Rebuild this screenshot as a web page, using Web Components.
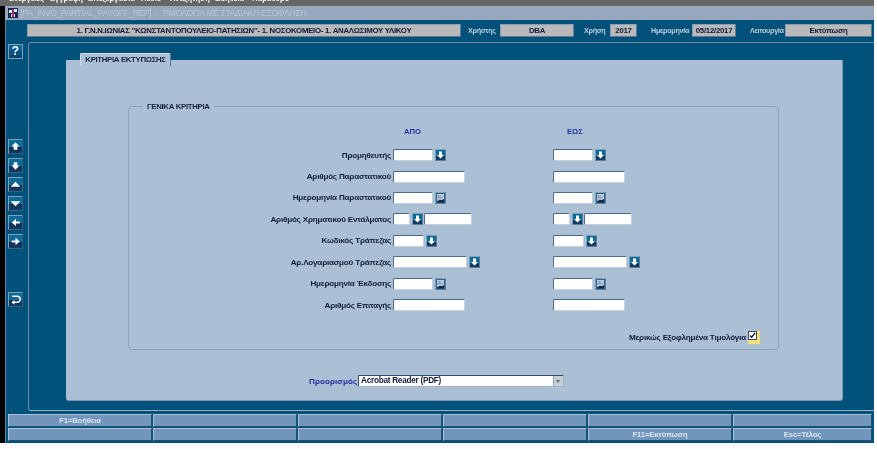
<!DOCTYPE html>
<html lang="el"><head><meta charset="utf-8"><title>PA_INVO_PARTIAL_PAYOFF_REP</title>
<style>
html,body{margin:0;height:100%;background:#fff;overflow:hidden}
body{font:bold 8px "Liberation Sans",Arial,sans-serif;color:#101c3c}
</style></head><body>
<app-shell>
  <menu-bar slot="menu"></menu-bar>
  <title-bar slot="title"></title-bar>
  <info-bar slot="info"></info-bar>
  <tool-bar slot="tools"></tool-bar>
  <form-panel slot="canvas"></form-panel>
  <fkey-bar slot="keys"></fkey-bar>
</app-shell>
<script>
const def=(name,css,html)=>{customElements.define(name,class extends HTMLElement{
  constructor(){super();this.attachShadow({mode:'open'}).innerHTML=`<style>${css}</style>${typeof html==='function'?'':html}`}
  connectedCallback(){if(typeof html==='function'){this.shadowRoot.innerHTML=`<style>${css}</style>${html(this)}`}}
})};
const arrows={
 up:'<path d="M5.5 2 9.2 6H7.2v3H3.8V6H1.8z" fill="#fff"/>',
 down:'<path d="M5.5 10 9.2 6H7.2V3H3.8v3H1.8z" fill="#fff"/>',
 tup:'<path d="M5.5 3.5 10 8H1z" fill="#fff"/>',
 tdown:'<path d="M5.5 8.5 10 4H1z" fill="#fff"/>',
 left:'<path d="M2 6l4-3.5V5h3.5v2H6v2.5z" fill="#fff"/>',
 right:'<path d="M9.5 6l-4-3.5V5H2v2h3.5v2.5z" fill="#fff"/>',
 back:'<path d="M2.5 3H7a2.7 2.7 0 0 1 0 5.6H4" fill="none" stroke="#fff" stroke-width="1.3"/><path d="M4.6 6.4v4.4L1.6 8.6z" fill="#fff"/>'
};
def('app-shell',`
 :host{display:flex;flex-direction:column;width:874px;height:443px;box-sizing:border-box;border-left:5px solid #000;background:#00527a;filter:blur(.3px);box-shadow:inset 1px 0 0 #5f7f9a}
 .body{flex:1;display:flex;min-height:0}
 ::slotted([slot=tools]){flex:none}
 ::slotted([slot=canvas]){flex:1}
`,`<slot name="menu"></slot><slot name="title"></slot><slot name="info"></slot><div class="body"><slot name="tools"></slot><slot name="canvas"></slot></div><slot name="keys"></slot>`);
def('menu-bar',`
 :host{display:block;height:6px;margin-left:-5px;background:#666;overflow:hidden;color:#f4f4f4;font-size:7.6px;line-height:9px;position:relative;z-index:1}
 span{position:absolute;top:-6px;white-space:nowrap}
`,`<span style="left:9px">Ενέργειες</span><span style="left:50px">Εγγραφή</span><span style="left:88px">Επεξεργασία</span><span style="left:141px">Πεδίο</span><span style="left:170px">Αναζήτηση</span><span style="left:215px">Βοήθεια</span><span style="left:252px">Παράθυρο</span>`);
def('title-bar',`
 :host{display:flex;align-items:center;gap:1.5px;height:14px;background:#98a8bc;color:#b9c6d6;font:normal 8.4px "Liberation Sans",Arial,sans-serif;letter-spacing:-.25px;white-space:pre;box-sizing:border-box;padding-left:2px}
 svg{width:12px;height:12px;flex:none}
`,`<svg viewBox="0 0 12 12"><rect x="1" y="1" width="10" height="10" fill="#1a2558"/><path d="M2 3h3v3H2zM7 2h3v3H7zM4 7h4v3H4z" fill="#e8e8f0"/><path d="M5 2h2v8H5z" fill="#8a3a70"/></svg><span>[PA_INVO_PARTIAL_PAYOFF_REP]  :  ΤΙΜΟΛΟΓΙΑ ΜΕ ΣΤΑΔΙΑΚΗ ΕΞΟΦΛΗΣΗ</span>`);
def('info-field',`
 :host{display:flex;align-items:center;justify-content:center;box-sizing:border-box;height:13px;background:#b9b9b9;color:#10183a;border:1px solid;border-color:#8b9db2 #5d7997 #5d7997 #8b9db2;border-radius:1px;font-size:7.8px;letter-spacing:-.25px;white-space:nowrap}
`,`<slot></slot>`);
def('info-bar',`
 :host{display:flex;align-items:center;height:22px;box-sizing:border-box;padding:4px 0 5px 22px;color:#bccbdb;font:bold 7.2px "Liberation Sans",Arial,sans-serif;letter-spacing:-.3px;white-space:nowrap}
 span{display:block}
`,`<info-field style="width:434px">1. Γ.Ν.Ν.ΙΩΝΙΑΣ "ΚΩΝΣΤΑΝΤΟΠΟΥΛΕΙΟ-ΠΑΤΗΣΙΩΝ"- 1. ΝΟΣΟΚΟΜΕΙΟ- 1. ΑΝΑΛΩΣΙΜΟΥ ΥΛΙΚΟΥ</info-field>
<span style="margin-left:7px;width:32px">Χρήστης</span><info-field style="width:74px">DBA</info-field>
<span style="margin-left:10px;width:26px">Χρήση</span><info-field style="width:27px">2017</info-field>
<span style="margin-left:14px;width:41px">Ημερομηνία</span><info-field style="width:44px">05/12/2017</info-field>
<span style="margin-left:14px;width:35px">Λειτουργία</span><info-field style="width:87px">Εκτύπωση</info-field>`);
def('tool-button',`
 :host{display:block;box-sizing:border-box;width:15px;height:15px;border:1px solid;border-color:#7fa0ba #39607f #39607f #7fa0ba;border-radius:1px;background:linear-gradient(#0b6a96 0,#0b6a96 50%,#0d2e57 55%,#123a63)}
 svg{display:block;width:13px;height:13px}
`,el=>`<svg viewBox="0 0 11 12">${arrows[el.getAttribute('icon')]||''}</svg>`);
def('tool-bar',`
 :host{display:flex;flex-direction:column;box-sizing:border-box;width:23px;padding:2px 0 0 3px}
 .help{box-sizing:border-box;width:15px;height:15px;flex:none;border:1px solid #7fa0ba;background:linear-gradient(#0a6c9b,#0a3f6e);color:#fff;font:bold 12px/13px "Liberation Sans",sans-serif;text-align:center;margin-bottom:80px}
 tool-button{margin-bottom:4px;flex:none}
 tool-button.back{margin-top:39px}
`,`<div class="help">?</div>
<tool-button icon="up"></tool-button><tool-button icon="down"></tool-button><tool-button icon="tup"></tool-button><tool-button icon="tdown"></tool-button><tool-button icon="left"></tool-button><tool-button icon="right"></tool-button><tool-button icon="back" class="back"></tool-button>`);
def('lov-button',`
 :host{display:block;box-sizing:border-box;width:11px;height:12px;flex:none;border:1px solid;border-color:#7fa0ba #5b7c9a #5b7c9a #7fa0ba;background:linear-gradient(#0b6a96,#0b6a96 55%,#123a63 60%,#123a63)}
 svg{display:block;width:9px;height:10px}
`,el=>el.getAttribute('kind')==='cal'
 ?`<svg viewBox="0 0 9 10"><rect width="9" height="10" fill="#2f6488"/><rect x="1" y="1" width="7" height="6.5" fill="#b7cada"/><path d="M1.5 3h3M1.5 4.5h5" stroke="#5b7c9a" stroke-width=".7"/><path d="M1 9.5 4 6.5l1.5 1L8 6v3.5z" fill="#0c2344"/></svg>`
 :`<svg viewBox="0 0 9 10"><path d="M4.5 8.5 8 5H6V1.5H3V5H1z" fill="#fff"/></svg>`);
def('text-input',`
 :host{display:block;box-sizing:border-box;height:12px;flex:none;background:#fff;border:1px solid;border-color:#4d6a8e #c3d1df #c3d1df #4d6a8e;border-radius:2px}
`,``);
def('field-set',`
 :host{display:flex;align-items:center;height:100%}
 ::slotted(lov-button){margin:0 1px 0 2px}
`,`<slot></slot>`);
def('form-row',`
 :host{display:grid;grid-template-columns:264px 160px 1fr;height:21.43px;align-items:center}
 .l{text-align:right;padding-right:2px;white-space:nowrap;font-size:8.1px;letter-spacing:-.2px}
`,el=>`<div class="l">${el.getAttribute('label')}</div><slot name="from"></slot><slot name="to"></slot>`);
def('crit-group',`
 :host{display:block;box-sizing:border-box;height:244px;margin:46px 63px 0 62px;border:1px solid #8ea4bb;border-radius:4px;position:relative;padding-top:20px}
 .legend{position:absolute;left:14px;top:-5px;background:#abc0d5;padding:0 4px;font-size:7.8px;letter-spacing:-.33px;line-height:10px;color:#16233f}
 .heads{display:flex;height:17.3px;font-size:7.6px;color:#1f2f9f;line-height:10px}
 .heads span:first-child{margin-left:275px;width:163px}
 .chk{display:flex;justify-content:flex-end;align-items:center;gap:2px;padding-right:18px;margin-top:15px;height:13px;font-size:8.1px;letter-spacing:-.2px}
 .box{box-sizing:border-box;width:12px;height:13px;background:#f7e27a;position:relative}
 .box svg{position:absolute;left:0;top:0;width:9px;height:9px;background:#fff;border:1px solid #3c4a66;box-sizing:border-box}
`,`<div class="legend">ΓΕΝΙΚΑ ΚΡΙΤΗΡΙΑ</div>
<div class="heads"><span>ΑΠΟ</span><span>ΕΩΣ</span></div>
<slot></slot>
<div class="chk"><span>Μερικώς Εξοφλημένα Τιμολόγια</span><span class="box"><svg viewBox="0 0 8 8"><path d="M1 4l2 2 4-5" fill="none" stroke="#10183a" stroke-width="1.5"/></svg></span></div>`);
const r=(label,f)=>{const s=slot=>`<field-set slot="${slot}">${f(slot)}</field-set>`;return `<form-row label="${label}">${s('from')}${s('to')}</form-row>`};
const t=w=>`<text-input style="width:${w}px"></text-input>`;
const lov='<lov-button></lov-button>',cal='<lov-button kind="cal"></lov-button>';
def('form-panel',`
 :host{display:block;box-sizing:border-box;border-top:1px solid #6f8aa5;border-left:1px solid #6f8aa5;border-bottom:1px solid #9ab0c4;border-radius:3px 0 0 3px;padding:17px 31px 9px 37px;height:369px}
 .panel{position:relative;box-sizing:border-box;height:100%;background:#abc0d5;border-radius:0 0 3px 3px;border-right:1px solid #8199b0;border-bottom:1px solid #7b94ac;padding-top:.1px}
 .tab{position:absolute;left:14px;top:-7px;box-sizing:border-box;width:91px;height:13px;background:#abc0d5;border-top:1px solid #d0dbe7;border-left:1px solid #d0dbe7;border-right:1px solid #5a7a98;border-radius:2px 2px 0 0;text-align:center;font-size:7.8px;letter-spacing:-.33px;line-height:12px;color:#16233f}
 .dest{display:flex;align-items:center;margin:25px 0 0 243px;font-size:8.1px;color:#1f2f9f;height:12px;white-space:nowrap}
 .dest b{display:block;width:47px;margin-right:2px;letter-spacing:.05px}
 .sel{box-sizing:border-box;width:206px;height:12px;background:#fff;border:1px solid;border-color:#33506f #9fb2c6 #9fb2c6 #33506f;border-radius:1px;color:#101c3c;font-size:8.2px;letter-spacing:-.25px;line-height:10px;padding-left:2px;position:relative}
 .sel i{position:absolute;right:0;top:0;width:9px;height:10px;background:#c8ced6;border-left:1px solid #9aa5b2}
 .sel i::after{content:"";position:absolute;left:2px;top:4px;border:2.5px solid transparent;border-top:3px solid #5d6a7c;border-bottom:0}
`,`<div class="panel"><div class="tab">ΚΡΙΤΗΡΙΑ ΕΚΤΥΠΩΣΗΣ</div>
<crit-group>
${r('Προμηθευτής',()=>t(40)+lov)}
${r('Αριθμός Παραστατικού',()=>t(72))}
${r('Ημερομηνία Παραστατικού',()=>t(40)+cal)}
${r('Αριθμός Χρηματικού Εντάλματος',()=>t(17)+lov+t(48))}
${r('Κωδικός Τράπεζας',()=>t(31)+lov)}
${r('Αρ.Λογαριασμού Τράπεζας',()=>t(74)+lov)}
${r('Ημερομηνία Έκδοσης',()=>t(40)+cal)}
${r('Αριθμός Επιταγής',()=>t(72))}
</crit-group>
<div class="dest"><b>Προορισμός</b><div class="sel">Acrobat Reader (PDF)<i></i></div></div>
</div>`);
def('fkey-button',`
 :host{display:flex;align-items:center;justify-content:center;box-sizing:border-box;height:13px;margin-right:1px;background:#7296bb;color:#dbe5ef;border:1px solid;border-color:#a9c1d8 #234f77 #234f77 #a9c1d8;font-size:7.6px;letter-spacing:-.1px;white-space:nowrap}
`,`<slot></slot>`);
def('fkey-bar',`
 :host{display:grid;grid-template-columns:145px repeat(4,145px) 1fr;gap:1px 0;height:32px;box-sizing:border-box;padding:3px 1px 0 3px;align-content:start}
`,`<fkey-button>F1=Βοήθεια</fkey-button><fkey-button></fkey-button><fkey-button></fkey-button><fkey-button></fkey-button><fkey-button></fkey-button><fkey-button></fkey-button>
<fkey-button></fkey-button><fkey-button></fkey-button><fkey-button></fkey-button><fkey-button></fkey-button><fkey-button>F11=Εκτύπωση</fkey-button><fkey-button>Esc=Τέλος</fkey-button>`);
</script>
</body></html>
